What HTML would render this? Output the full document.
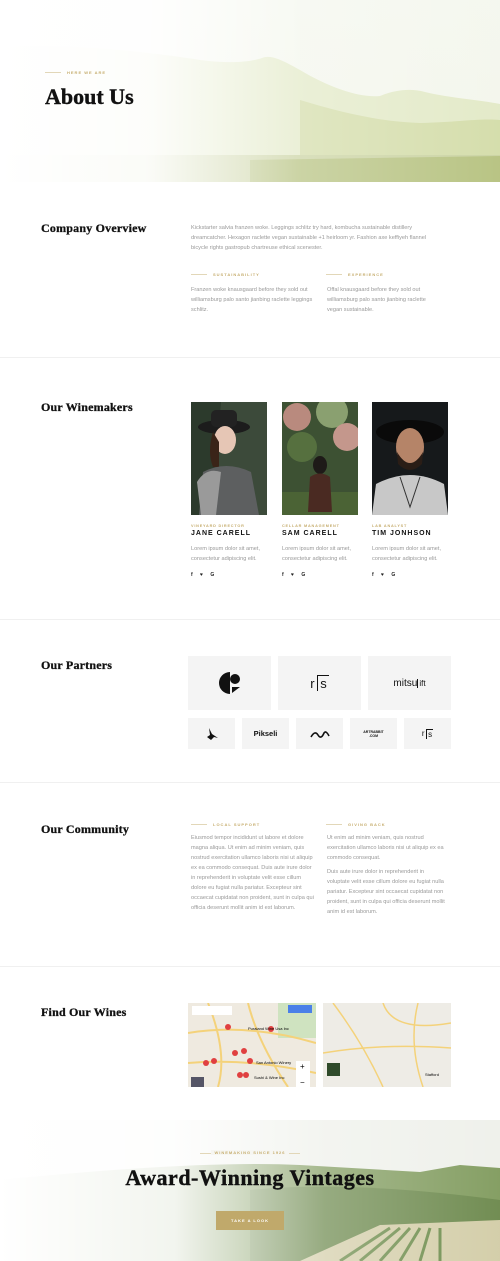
<!DOCTYPE html>
<html><head><meta charset="utf-8"><style>
*{margin:0;padding:0;box-sizing:border-box}
body{width:500px;height:1261px;background:#fff;font-family:"Liberation Sans",sans-serif;position:relative;overflow:hidden}
.a{position:absolute}
h2{position:absolute;left:41px;font-family:"Liberation Serif",serif;font-weight:bold;font-size:12px;color:#111;letter-spacing:.2px;-webkit-text-stroke:.3px #111}
.p{position:absolute;font-size:5.6px;line-height:10px;color:#999}
.lab{position:absolute;font-size:4px;letter-spacing:1px;color:#c6ad6e;font-weight:bold}
.lab:before{content:"";position:absolute;left:-22px;top:2px;width:16px;height:1px;background:#e2d7b8}
.hr{position:absolute;left:0;width:500px;height:1px;background:#f0f0f0}
.box{position:absolute;background:#f4f4f4;display:flex;align-items:center;justify-content:center;color:#111;font-weight:bold}
.nm{position:absolute;font-size:7px;font-weight:bold;letter-spacing:1px;color:#111}
.rl{position:absolute;font-size:3.8px;letter-spacing:.8px;color:#c6ad6e;font-weight:bold}
.soc{position:absolute;font-size:5px;color:#222;letter-spacing:3px;font-weight:bold}
</style></head><body>
<svg class="a" style="left:0;top:0" width="500" height="182">
<defs>
<linearGradient id="fade" x1="0" x2="1"><stop offset="0" stop-color="#fff" stop-opacity="1"/><stop offset=".3" stop-color="#fff" stop-opacity=".92"/><stop offset=".6" stop-color="#fff" stop-opacity=".3"/><stop offset="1" stop-color="#fff" stop-opacity=".05"/></linearGradient>
<linearGradient id="sky" x1="0" y1="0" x2="0" y2="1"><stop offset="0" stop-color="#f4f7ee"/><stop offset="1" stop-color="#f3f5ea"/></linearGradient>
</defs>
<rect width="500" height="182" fill="url(#sky)"/>
<path d="M0 48 C60 42 150 52 200 60 C230 64 250 62 262 58 C272 54 285 62 300 70 C330 88 360 98 380 96 C395 90 410 88 425 92 C450 98 480 100 500 104 L500 160 L0 160Z" fill="#e2e9c6"/>
<path d="M300 100 C340 112 380 122 420 123 C460 122 480 118 500 120 L500 160 L300 160Z" fill="#d3dca8"/>
<rect y="155" width="500" height="27" fill="#c9d2a0"/>
<path d="M250 160 L500 156 L500 182 L250 182Z" fill="#b5c17e"/>
<rect width="500" height="182" fill="url(#fade)"/>
</svg>
<div class="lab" style="left:67px;top:70px">HERE WE ARE</div>
<div class="a" style="left:45px;top:84px;font-family:'Liberation Serif',serif;font-weight:bold;font-size:22px;color:#111;-webkit-text-stroke:.4px #111">About Us</div>

<h2 style="top:221px">Company Overview</h2>
<div class="p" style="left:191px;top:223px;width:250px">Kickstarter salvia franzen woke. Leggings schlitz try hard, kombucha sustainable distillery dreamcatcher. Hexagon raclette vegan sustainable +1 heirloom yr. Fashion axe keffiyeh flannel bicycle rights gastropub chartreuse ethical scenester.</div>
<div class="lab" style="left:213px;top:272px">SUSTAINABILITY</div>
<div class="lab" style="left:348px;top:272px">EXPERIENCE</div>
<div class="p" style="left:191px;top:285px;width:125px">Franzen woke knausgaard before they sold out williamsburg palo santo jianbing raclette leggings schlitz.</div>
<div class="p" style="left:327px;top:285px;width:115px">Offal knausgaard before they sold out williamsburg palo santo jianbing raclette vegan sustainable.</div>
<div class="hr" style="top:357px"></div>

<h2 style="top:400px">Our Winemakers</h2>
<svg class="a" style="left:191px;top:402px" width="76" height="113"><rect width="76" height="113" fill="#3c4a3a"/><path d="M0 0h30l-10 113H0z" fill="#2c3a2c"/><ellipse cx="33" cy="25" rx="26" ry="7" fill="#1c1c1c"/><rect x="20" y="8" width="26" height="17" rx="5" fill="#222"/><ellipse cx="34" cy="38" rx="11" ry="14" fill="#e6c6b5"/><path d="M22 30q-6 20 0 35h6V40z" fill="#3a2418"/><path d="M8 113 L12 70 Q35 58 60 70 L68 113Z" fill="#5d5f60"/><path d="M6 80 Q15 65 30 70 L25 113 H10Z" fill="#9a9a9a"/></svg>
<svg class="a" style="left:282px;top:402px" width="76" height="113"><rect width="76" height="113" fill="#3d5133"/><circle cx="15" cy="15" r="14" fill="#b98a7e"/><circle cx="50" cy="10" r="16" fill="#8aa070"/><circle cx="65" cy="35" r="14" fill="#c4978c"/><circle cx="20" cy="45" r="15" fill="#56703f"/><rect y="90" width="76" height="23" fill="#4b6335"/><ellipse cx="38" cy="63" rx="7" ry="9" fill="#1e1a18"/><path d="M26 110 L28 75 Q38 68 48 75 L50 110Z" fill="#4a2a22"/></svg>
<svg class="a" style="left:372px;top:402px" width="76" height="113"><rect width="76" height="113" fill="#16191b"/><ellipse cx="38" cy="30" rx="34" ry="12" fill="#0a0a0a"/><ellipse cx="38" cy="45" rx="14" ry="19" fill="#b58468"/><path d="M25 50 Q38 72 51 50 L50 62 Q38 74 26 62Z" fill="#2a1d16"/><path d="M0 113 L4 82 Q38 64 72 82 L76 113Z" fill="#c8c8c8"/><path d="M28 75 L38 105 L48 75" stroke="#333" fill="none"/></svg>
<div class="rl" style="left:191px;top:524px">VINEYARD DIRECTOR</div>
<div class="rl" style="left:282px;top:524px">CELLAR MANAGEMENT</div>
<div class="rl" style="left:372px;top:524px">LAB ANALYST</div>
<div class="nm" style="left:191px;top:530px">JANE CARELL</div>
<div class="nm" style="left:282px;top:530px">SAM CARELL</div>
<div class="nm" style="left:372px;top:530px">TIM JONHSON</div>
<div class="p" style="left:191px;top:544px;width:78px">Lorem ipsum dolor sit amet, consectetur adipiscing elit.</div>
<div class="p" style="left:282px;top:544px;width:78px">Lorem ipsum dolor sit amet, consectetur adipiscing elit.</div>
<div class="p" style="left:372px;top:544px;width:78px">Lorem ipsum dolor sit amet, consectetur adipiscing elit.</div>
<div class="soc" style="left:191px;top:572px">f ♥ G</div>
<div class="soc" style="left:282px;top:572px">f ♥ G</div>
<div class="soc" style="left:372px;top:572px">f ♥ G</div>
<div class="hr" style="top:619px"></div>

<h2 style="top:658px">Our Partners</h2>
<div class="box" style="left:188px;top:656px;width:83px;height:54px"><svg width="24" height="24"><path d="M12 1A11 11 0 0 0 12 23Z" fill="#111"/><circle cx="17" cy="8" r="5" fill="#111"/><path d="M14 16h8l-8 6z" fill="#111"/></svg></div>
<div class="box" style="left:278px;top:656px;width:83px;height:54px;font-size:13px;font-weight:normal">r&#8201;<span style="border-left:1px solid #111;border-top:1px solid #111;padding:0 2px">s</span></div>
<div class="box" style="left:368px;top:656px;width:83px;height:54px;font-size:10px;font-weight:normal">mitsu<span style="font-size:8px;vertical-align:6px;border-left:1px solid #111;padding-left:1px">ift</span></div>
<div class="box" style="left:188px;top:718px;width:47px;height:31px"><svg width="14" height="12"><path d="M4 0L7 6L13 10L9 9L6 12L2 9L5 7Z" fill="#111"/></svg></div>
<div class="box" style="left:242px;top:718px;width:47px;height:31px;font-size:7.5px">Pikseli</div>
<div class="box" style="left:296px;top:718px;width:47px;height:31px"><svg width="20" height="8"><path d="M1 7Q5 0 8 5Q11 10 14 3Q16 0 19 6" stroke="#111" stroke-width="1.6" fill="none"/></svg></div>
<div class="box" style="left:350px;top:718px;width:47px;height:31px;font-size:3.5px;line-height:4px;text-align:center">ARTRABBIT<br>.COM</div>
<div class="box" style="left:404px;top:718px;width:47px;height:31px;font-size:8px;font-weight:normal">r&#8201;<span style="border-left:1px solid #111;border-top:1px solid #111;padding:0 1px">s</span></div>
<div class="hr" style="top:782px"></div>

<h2 style="top:822px">Our Community</h2>
<div class="lab" style="left:213px;top:822px">LOCAL SUPPORT</div>
<div class="lab" style="left:348px;top:822px">GIVING BACK</div>
<div class="p" style="left:191px;top:833px;width:125px">Eiusmod tempor incididunt ut labore et dolore magna aliqua. Ut enim ad minim veniam, quis nostrud exercitation ullamco laboris nisi ut aliquip ex ea commodo consequat. Duis aute irure dolor in reprehenderit in voluptate velit esse cillum dolore eu fugiat nulla pariatur. Excepteur sint occaecat cupidatat non proident, sunt in culpa qui officia deserunt mollit anim id est laborum.</div>
<div class="p" style="left:327px;top:833px;width:120px">Ut enim ad minim veniam, quis nostrud exercitation ullamco laboris nisi ut aliquip ex ea commodo consequat.<br><span style="display:block;height:4px"></span>Duis aute irure dolor in reprehenderit in voluptate velit esse cillum dolore eu fugiat nulla pariatur. Excepteur sint occaecat cupidatat non proident, sunt in culpa qui officia deserunt mollit anim id est laborum.</div>
<div class="hr" style="top:966px"></div>

<h2 style="top:1005px">Find Our Wines</h2>
<svg class="a" style="left:188px;top:1003px" width="128" height="84"><rect width="128" height="84" fill="#efeae0"/><path d="M90 0h38v35h-38z" fill="#cfe3c0"/><path d="M0 30Q60 20 128 40M20 0Q40 50 30 84M60 0Q70 40 100 84M0 60Q60 55 128 70" stroke="#f4d27a" stroke-width="2" fill="none"/><rect x="4" y="3" width="40" height="9" fill="#fff"/><rect x="100" y="2" width="24" height="8" fill="#4a80e8"/><g fill="#e04040"><circle cx="40" cy="24" r="3"/><circle cx="83" cy="26" r="3"/><circle cx="47" cy="50" r="3"/><circle cx="56" cy="48" r="3"/><circle cx="18" cy="60" r="3"/><circle cx="26" cy="58" r="3"/><circle cx="62" cy="58" r="3"/><circle cx="52" cy="72" r="3"/><circle cx="58" cy="72" r="3"/></g><rect x="108" y="58" width="14" height="28" fill="#fff"/><rect x="3" y="74" width="13" height="10" fill="#556"/><text x="60" y="27" font-size="4" font-family="Liberation Sans">Puraland Wine Usa Inc</text><text x="68" y="61" font-size="4" font-family="Liberation Sans">San Antonio Winery</text><text x="66" y="76" font-size="4" font-family="Liberation Sans">Sushi &amp; Wine Inc</text><text x="112" y="66" font-size="8">+</text><text x="112" y="82" font-size="8">−</text></svg>
<svg class="a" style="left:323px;top:1003px" width="128" height="84"><rect width="128" height="84" fill="#eeece6"/><path d="M10 0Q40 40 60 84M95 0Q85 40 100 84M0 50Q60 40 128 45M60 0Q70 30 128 20" stroke="#f4d27a" stroke-width="1.5" fill="none"/><rect x="4" y="60" width="13" height="13" fill="#2f4a2a"/><text x="102" y="73" font-size="4" font-family="Liberation Sans">Stafford</text></svg>

<svg class="a" style="left:0;top:1120px" width="500" height="141">
<defs><linearGradient id="f2" x1="0" x2="1"><stop offset="0" stop-color="#fff" stop-opacity="1"/><stop offset=".35" stop-color="#fff" stop-opacity=".9"/><stop offset=".65" stop-color="#fff" stop-opacity=".3"/><stop offset="1" stop-color="#fff" stop-opacity=".05"/></linearGradient></defs>
<rect width="500" height="141" fill="#eef0ea"/>
<path d="M0 60Q200 40 300 45L420 52L460 45L500 48V141H0Z" fill="#7f9a5c"/>
<path d="M250 70Q350 60 500 80V141H250Z" fill="#6a874a"/>
<path d="M300 141L380 105L500 100V141Z" fill="#d2cca6"/>
<path d="M340 141L390 108M360 141L400 108M380 141L410 108M400 141L420 108M420 141L430 108M440 141L440 108" stroke="#6a8a48" stroke-width="3"/>
<rect width="500" height="141" fill="url(#f2)"/>
</svg>
<div class="a" style="left:200px;top:1153px;width:100px;height:1px;background:#e2d7b8"></div>
<div class="a" style="left:0;width:500px;top:1150px;text-align:center;font-size:4px;letter-spacing:1px;color:#c6ad6e;font-weight:bold"><span style="background:#f6f6f2;padding:0 3px">WINEMAKING SINCE 1926</span></div>
<div class="a" style="left:0;width:500px;top:1165px;text-align:center;font-family:'Liberation Serif',serif;font-weight:bold;font-size:22px;letter-spacing:.5px;color:#111;-webkit-text-stroke:.4px #111">Award-Winning Vintages</div>
<div class="a" style="left:216px;top:1211px;width:68px;height:19px;background:#c0a96b;color:#fff;font-size:4px;letter-spacing:1px;font-weight:bold;text-align:center;line-height:19px">TAKE A LOOK</div>
</body></html>
